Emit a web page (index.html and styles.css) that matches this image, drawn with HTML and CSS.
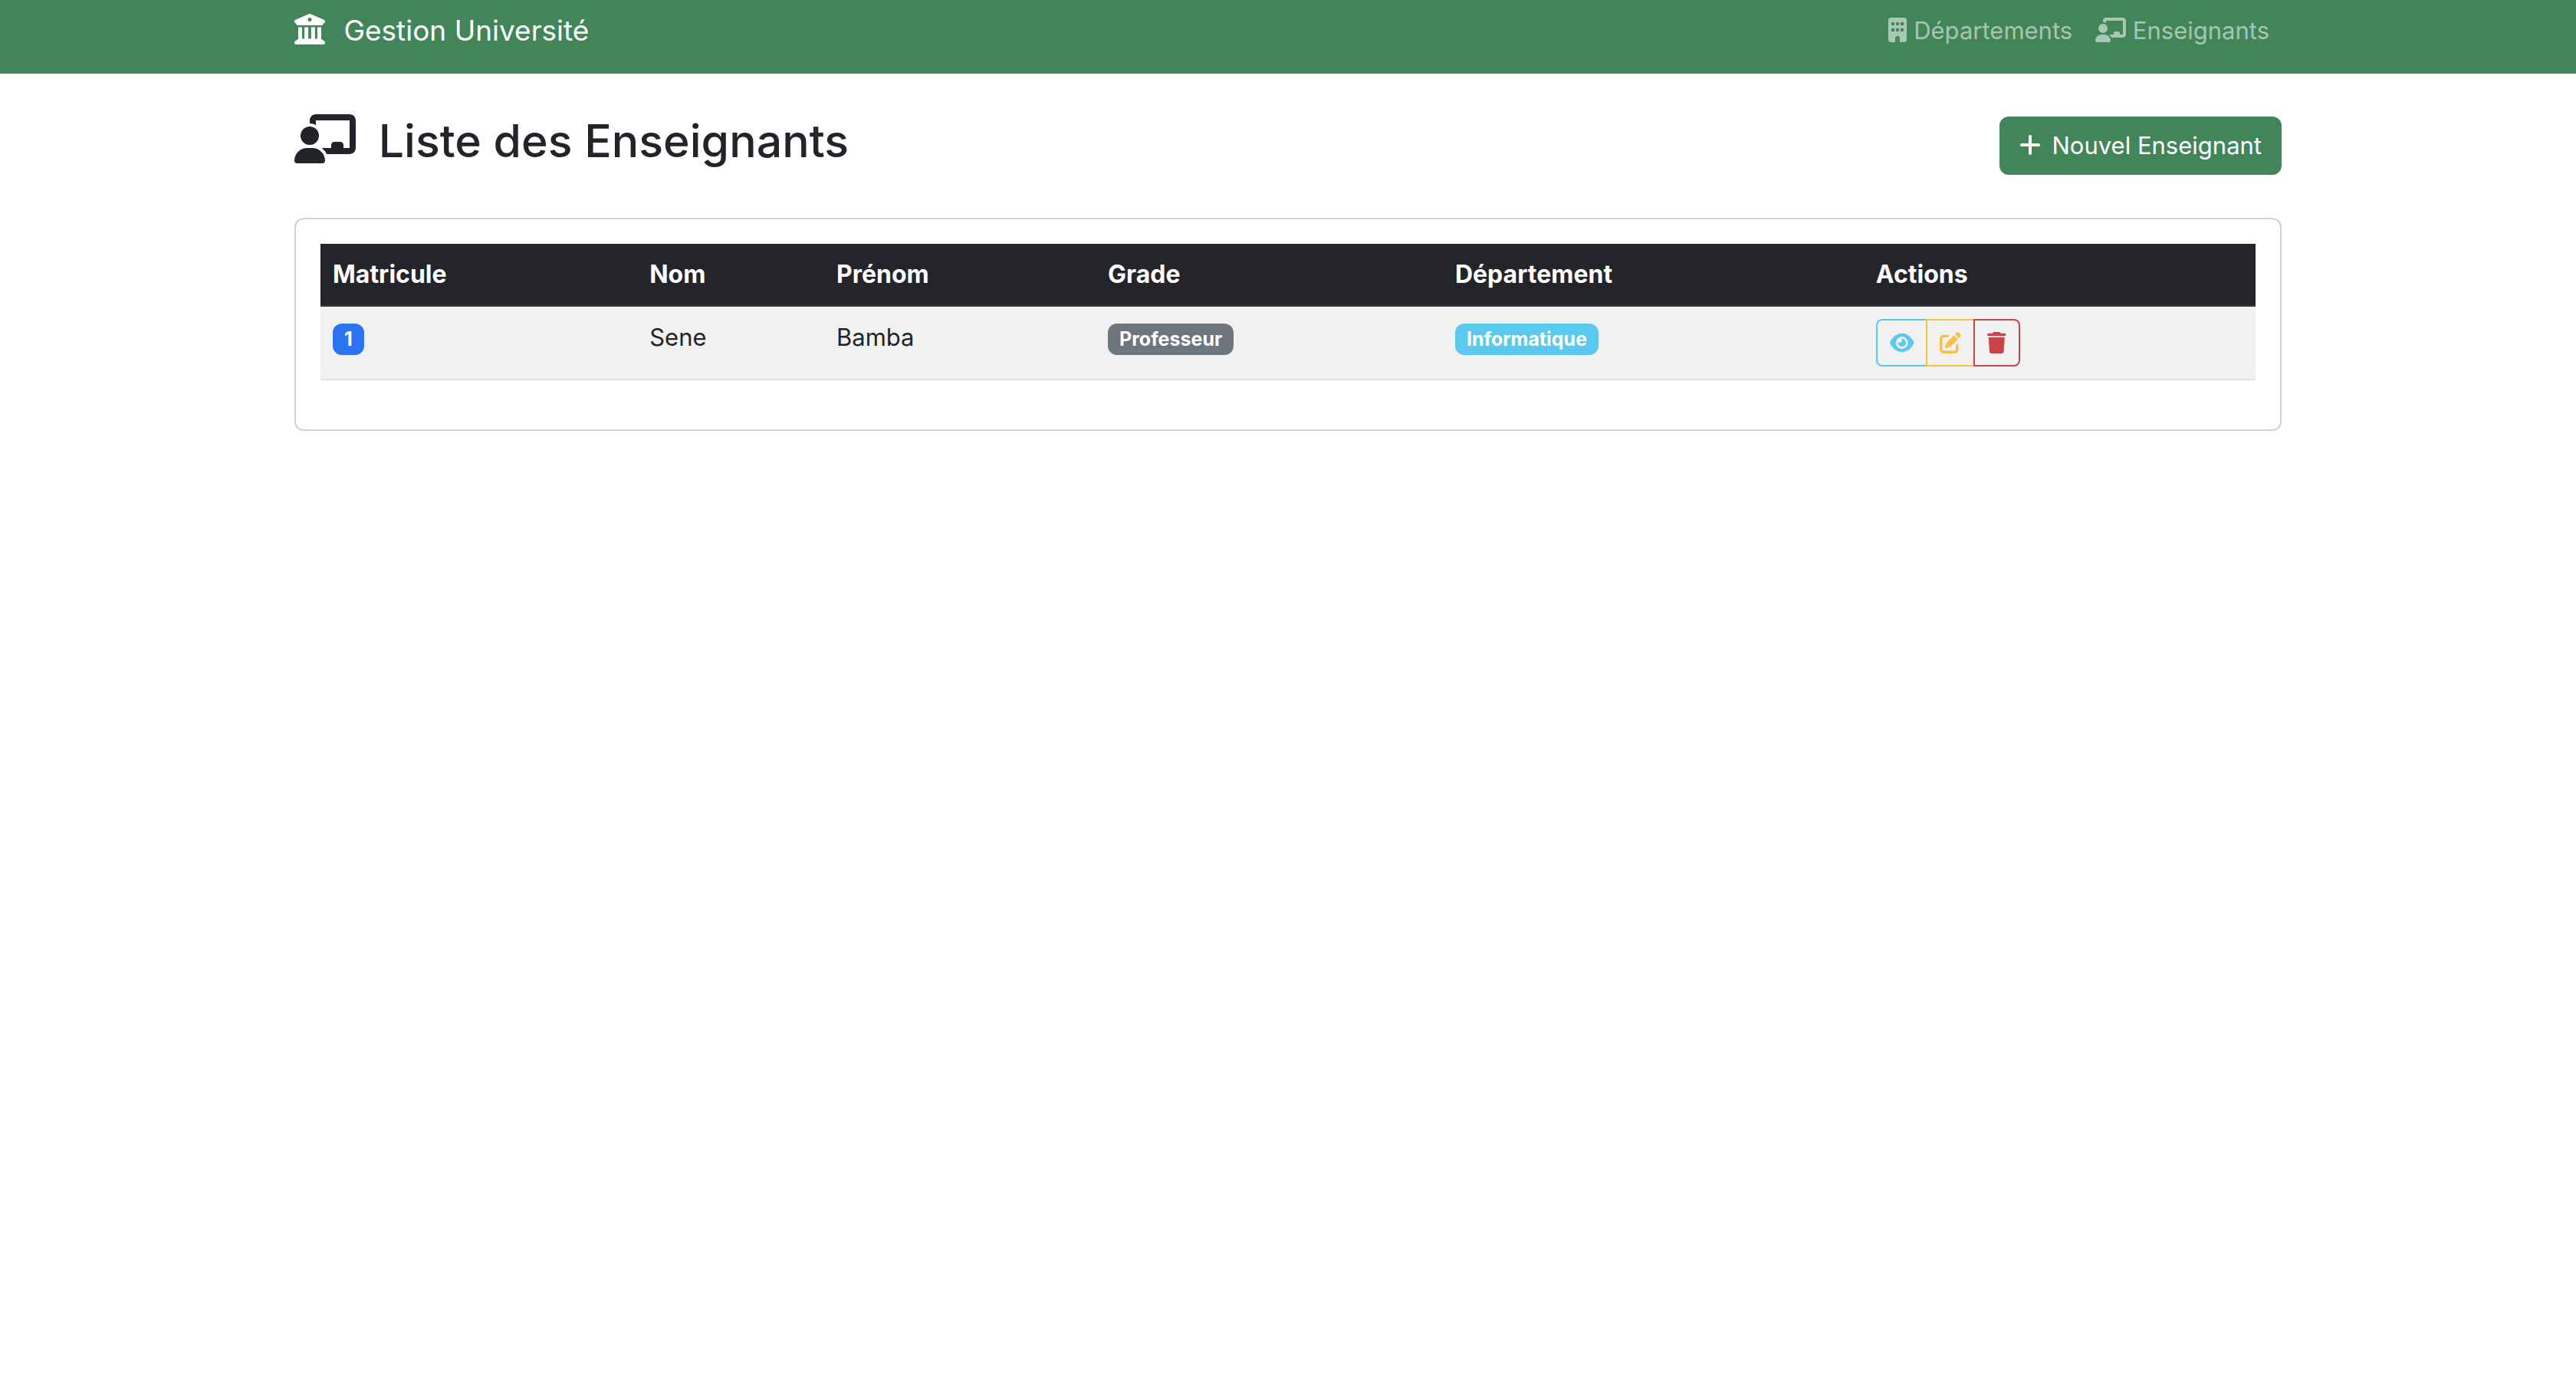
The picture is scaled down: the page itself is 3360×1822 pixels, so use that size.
FILE: index.html
```html
<!DOCTYPE html>
<html lang="fr">
<head>
<meta charset="utf-8">
<title>Liste des Enseignants</title>
<link rel="stylesheet" href="styles.css">
</head>
<body>
<svg class="sprite" aria-hidden="true">
  <symbol id="board" viewBox="0 0 640 512"><path d="M160 64c0-35.300 28.700-64 64-64H576c35.300 0 64 28.700 64 64V352c0 35.300-28.700 64-64 64H336.800c-11.800-25.500-29.900-47.500-52.400-64H384V320c0-17.700 14.300-32 32-32h64c17.700 0 32 14.300 32 32v32h64V64L224 64v49.100C205.200 102.200 183.300 96 160 96V64zm0 64a96 96 0 1 1 0 192 96 96 0 1 1 0-192zM133.300 352h53.300C260.300 352 320 411.700 320 485.300c0 14.700-11.900 26.700-26.700 26.700H26.700C11.900 512 0 500.100 0 485.300C0 411.700 59.700 352 133.300 352z"/></symbol>
</svg>
<header class="navbar">
  <div class="container navbar-inner">
    <a class="brand" href="#"><svg class="icon icon-square me" viewBox="0 0 512 512" aria-hidden="true"><path d="M243.400 2.600l-224 96c-14 6-21.800 21-18.700 35.800S16.800 160 32 160v8c0 13.300 10.700 24 24 24H456c13.300 0 24-10.700 24-24v-8c15.200 0 28.300-10.700 31.300-25.600s-4.800-29.900-18.700-35.800l-224-96c-8-3.400-17.200-3.400-25.200 0zM128 224H64V420.300c-.6 .3-1.200 .7-1.800 1.100l-48 32c-11.700 7.800-17 22.400-12.900 35.900S17.900 512 32 512H480c14.100 0 26.500-9.200 30.600-22.700s-1.100-28.100-12.900-35.900l-48-32c-.6-.4-1.200-.7-1.800-1.100V224H384V416H344V224H280V416H232V224H168V416H128V224zM256 64a32 32 0 1 1 0 64 32 32 0 1 1 0-64z"/></svg> Gestion Université</a>
    <nav class="nav">
      <a class="nav-link" href="#"><svg class="icon icon-building" viewBox="0 0 384 512" aria-hidden="true"><path d="M48 0C21.500 0 0 21.500 0 48V464c0 26.500 21.500 48 48 48h96V432c0-26.500 21.500-48 48-48s48 21.500 48 48v80h96c26.500 0 48-21.500 48-48V48c0-26.500-21.500-48-48-48H48zM64 240c0-8.800 7.200-16 16-16h32c8.800 0 16 7.200 16 16v32c0 8.800-7.200 16-16 16H80c-8.800 0-16-7.200-16-16V240zm112-16h32c8.800 0 16 7.200 16 16v32c0 8.800-7.200 16-16 16H176c-8.800 0-16-7.200-16-16V240c0-8.800 7.200-16 16-16zm80 16c0-8.800 7.200-16 16-16h32c8.800 0 16 7.200 16 16v32c0 8.800-7.200 16-16 16H272c-8.800 0-16-7.200-16-16V240zM80 96h32c8.800 0 16 7.200 16 16v32c0 8.800-7.200 16-16 16H80c-8.800 0-16-7.200-16-16V112c0-8.800 7.200-16 16-16zm80 16c0-8.800 7.200-16 16-16h32c8.800 0 16 7.200 16 16v32c0 8.800-7.200 16-16 16H176c-8.800 0-16-7.200-16-16V112zM272 96h32c8.800 0 16 7.200 16 16v32c0 8.800-7.200 16-16 16H272c-8.800 0-16-7.200-16-16V112c0-8.800 7.200-16 16-16z"/></svg> Départements</a>
      <a class="nav-link" href="#"><svg class="icon icon-board" aria-hidden="true"><use href="#board"/></svg> Enseignants</a>
    </nav>
  </div>
</header>
<main class="container content">
  <div class="page-head">
    <h1 class="title"><svg class="icon icon-board me" aria-hidden="true"><use href="#board"/></svg> Liste des Enseignants</h1>
    <button class="btn-new" type="button"><svg class="icon icon-narrow me-sm" viewBox="0 0 448 512" aria-hidden="true"><path d="M256 80c0-17.700-14.300-32-32-32s-32 14.300-32 32V224H48c-17.700 0-32 14.300-32 32s14.300 32 32 32H192V432c0 17.700 14.300 32 32 32s32-14.300 32-32V288H400c17.700 0 32-14.300 32-32s-14.300-32-32-32H256V80z"/></svg> Nouvel Enseignant</button>
  </div>
  <section class="card">
    <table class="table">
      <colgroup><col class="col-id"><col class="col-last"><col class="col-first"><col class="col-grade"><col class="col-dept"><col></colgroup>
      <thead>
        <tr><th scope="col">Matricule</th><th scope="col">Nom</th><th scope="col">Prénom</th><th scope="col">Grade</th><th scope="col">Département</th><th scope="col">Actions</th></tr>
      </thead>
      <tbody>
        <tr>
          <td><span class="badge badge-primary">1</span></td>
          <td>Sene</td>
          <td>Bamba</td>
          <td><span class="badge badge-secondary">Professeur</span></td>
          <td><span class="badge badge-info">Informatique</span></td>
          <td>
            <div class="btn-group">
              <button class="btn-action btn-view" type="button" aria-label="Voir"><svg class="icon icon-eye" viewBox="0 0 576 512" aria-hidden="true"><path d="M288 32c-80.800 0-145.500 36.800-192.600 80.600C48.600 156 17.300 208 2.500 243.700c-3.300 7.900-3.300 16.700 0 24.600C17.300 304 48.600 356 95.400 399.400C142.500 443.200 207.200 480 288 480s145.500-36.800 192.600-80.600c46.800-43.500 78.100-95.400 93-131.100c3.300-7.900 3.300-16.700 0-24.600c-14.900-35.700-46.200-87.700-93-131.100C433.500 68.800 368.800 32 288 32zM144 256a144 144 0 1 1 288 0 144 144 0 1 1 -288 0zm144-64c0 35.300-28.700 64-64 64c-7.100 0-13.900-1.200-20.300-3.300c-5.500-1.800-11.900 1.600-11.700 7.400c.3 6.900 1.300 13.800 3.200 20.700c13.700 51.200 66.400 81.600 117.600 67.900s81.600-66.400 67.900-117.600c-11.100-41.500-47.800-69.400-88.600-71.100c-5.800-.2-9.200 6.100-7.400 11.700c2.100 6.400 3.300 13.200 3.300 20.300z"/></svg></button>
              <button class="btn-action btn-edit" type="button" aria-label="Modifier"><svg class="icon icon-square" viewBox="0 0 512 512" aria-hidden="true"><path d="M471.600 21.700c-21.900-21.900-57.300-21.900-79.200 0L362.300 51.700l97.900 97.900 30.100-30.100c21.900-21.900 21.900-57.300 0-79.200L471.600 21.700zm-299.200 220c-6.100 6.100-10.800 13.600-13.500 21.900l-29.600 88.800c-2.900 8.600-.6 18.100 5.800 24.600s15.900 8.700 24.600 5.800l88.800-29.600c8.200-2.700 15.700-7.400 21.900-13.500L437.700 172.300 339.700 74.300 172.400 241.700zM96 64C43 64 0 107 0 160V416c0 53 43 96 96 96H352c53 0 96-43 96-96V320c0-17.700-14.300-32-32-32s-32 14.300-32 32v96c0 17.700-14.300 32-32 32H96c-17.700 0-32-14.300-32-32V160c0-17.700 14.300-32 32-32h96c17.700 0 32-14.300 32-32s-14.300-32-32-32H96z"/></svg></button>
              <button class="btn-action btn-delete" type="button" aria-label="Supprimer"><svg class="icon icon-narrow" viewBox="0 0 448 512" aria-hidden="true"><path d="M135.200 17.700L128 32H32C14.300 32 0 46.300 0 64S14.300 96 32 96H416c17.700 0 32-14.300 32-32s-14.300-32-32-32H320l-7.200-14.300C307.400 6.800 296.300 0 284.200 0H163.800c-12.100 0-23.200 6.800-28.600 17.700zM416 128H32L53.200 467c1.600 25.300 22.600 45 47.900 45H346.900c25.300 0 46.300-19.700 47.900-45L416 128z"/></svg></button>
            </div>
          </td>
        </tr>
      </tbody>
    </table>
  </section>
</main>
</body>
</html>
```
FILE: styles.css
```css
*, *::before, *::after { box-sizing: border-box; }

body {
  margin: 0;
  background: #fff;
  color: #212529;
  font-family: Inter, "Liberation Sans", sans-serif;
  font-size: 31px;
  line-height: 48px;
}

.sprite { display: none; }

.container {
  width: 100%;
  max-width: 2640px;
  margin: 0 auto;
  padding: 0 24px;
}

/* Icons scale with the text they sit in */
.icon { height: 1em; fill: currentColor; vertical-align: -0.125em; overflow: visible; }
.icon-square { width: 1em; }
.icon-building { width: 0.75em; }
.icon-board { width: 1.25em; }
.icon-narrow { width: 0.875em; }
.icon-eye { width: 1.125em; }
.me { margin-right: 14px; }
.me-sm { margin-right: 6px; }

/* Navigation bar */
.navbar { background: #428559; padding-bottom: 16px; }
.navbar-inner { display: flex; align-items: center; justify-content: space-between; }
.brand { color: #fff; font-size: 37px; line-height: 60px; padding: 10px 0; text-decoration: none; }
.brand .icon { font-size: 40px; }
.nav { display: flex; }
.nav-link { color: rgba(255, 255, 255, 0.55); padding: 16px; text-decoration: none; }
.nav-link .icon { font-size: 32px; }
.nav-link { padding-right: 16px; }
.nav-link + .nav-link { padding-left: 14px; }

/* Page heading */
.content { padding-top: 48px; }
.page-head {
  display: flex;
  align-items: center;
  justify-content: space-between;
  margin-bottom: 48px;
}
.title { margin: 0 0 12px; font-size: 59px; line-height: 80px; font-weight: 500; }
.title .icon { font-size: 64px; }
.btn-new {
  padding: 12px 24px;
  border: 2px solid #428559;
  border-radius: 12px;
  background: #428559;
  color: #fff;
  font: inherit;
}
.btn-new .icon { font-size: 32px; }

/* Teacher table */
.card {
  padding: 32px;
  border: 2px solid #d2d2d2;
  border-radius: 12px;
  background: #fff;
}
.table {
  width: 100%;
  margin-bottom: 32px;
  border-collapse: separate;
  border-spacing: 0;
  table-layout: fixed;
}
.col-id { width: 16.37%; }
.col-last { width: 9.66%; }
.col-first { width: 14.03%; }
.col-grade { width: 17.94%; }
.col-dept { width: 21.75%; }
.table th, .table td { padding: 16px; text-align: left; vertical-align: top; }
.table th { background: #23252a; color: #fff; font-size: 32px; font-weight: 700; border-bottom: 2px solid #393b3e; }
.table td { background: #f1f1f1; border-bottom: 2px solid #dee2e6; }

.badge {
  display: inline-block;
  padding: 8px 15px;
  border-radius: 12px;
  color: #fff;
  font-size: 25px;
  font-weight: 700;
  line-height: 25px;
}
.badge-primary { background: #2b72f4; }
.badge-secondary { background: #6d757d; }
.badge-info { background: #5bc9ee; }

.btn-group { display: flex; }
.btn-action {
  padding: 8px 16px;
  border: 2px solid currentColor;
  background: transparent;
  font: inherit;
  font-size: 28px;
  line-height: 42px;
}
.btn-action + .btn-action { margin-left: -2px; }
.btn-action:first-child { border-radius: 8px 0 0 8px; }
.btn-action:last-child { border-radius: 0 8px 8px 0; }
.btn-view { color: #5bc9ee; }
.btn-edit { color: #f7c244; }
.btn-delete { color: #cb444a; }
```
